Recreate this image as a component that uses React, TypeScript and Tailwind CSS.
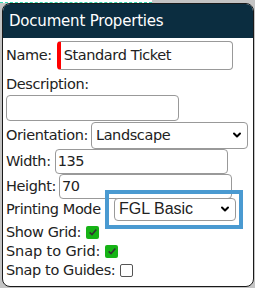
import { ChevronDown } from "lucide-react";

const FONT = { fontFamily: '"DejaVu Sans", "Liberation Sans", sans-serif' };

const Check = ({ on }: { on: boolean }) =>
    on ? (
        <span className="inline-flex w-[13px] h-[13px] rounded-[2px] bg-[#16b316] items-center justify-center">
            <svg viewBox="0 0 12 12" className="w-[10px] h-[10px]">
                <path d="M2 6.5 L4.8 9 L10 3" fill="none" stroke="#333" strokeWidth="2" />
            </svg>
        </span>
    ) : (
        <span className="inline-block w-[13px] h-[13px] rounded-[2px] border border-[#555] bg-white" />
    );

export default function App() {
    return (
        <div className="w-[255px] h-[288px] bg-[#c4c4c4] relative overflow-hidden" style={FONT}>
            <div className="absolute left-0 top-0 w-[152px] h-[3px] bg-white border-b border-dashed border-[#33d6b0]" />
            <div className="absolute left-[2px] top-[3px] w-[252px] h-[284px] bg-white border-[1.5px] border-[#1a1a1a] rounded-[8px] overflow-hidden flex flex-col text-[#222]">
                <div className="h-[34px] bg-[#0b2d40] text-white text-[15px] flex items-center px-[6px] tracking-[-0.2px]">
                    Document Properties
                </div>
                <div className="flex flex-col px-[3px] text-[14.5px] tracking-[-0.4px] leading-none">
                    <div className="flex items-center gap-[5px] mt-[3px]">
                        <span>Name:</span>
                        <div className="w-[176px] h-[29px] border border-[#999] border-l-[4px] border-l-[#ff0000] rounded-[4px] flex items-center px-[3px]">
                            Standard Ticket
                        </div>
                    </div>
                    <div className="mt-[7px]">Description:</div>
                    <div className="mt-[3px] w-[173px] h-[26px] border border-[#999] rounded-[4px]" />
                    <div className="flex items-center gap-[3px] mt-[1px]">
                        <span>Orientation:</span>
                        <div className="w-[157px] h-[27px] border border-[#999] rounded-[4px] flex items-center justify-between px-[4px]">
                            <span>Landscape</span>
                            <ChevronDown size={12} strokeWidth={4} className="text-black" />
                        </div>
                    </div>
                    <div className="flex items-center gap-[4px]">
                        <span>Width:</span>
                        <div className="w-[173px] h-[25px] border border-[#999] rounded-[4px] flex items-center px-[2px]">135</div>
                    </div>
                    <div className="flex items-center gap-[3px]">
                        <span>Height:</span>
                        <div className="w-[173px] h-[25px] border border-[#999] rounded-[4px] flex items-center px-[2px]">70</div>
                    </div>
                    <div className="flex items-center -mt-[9px]">
                        <span className="w-[99px] whitespace-nowrap">Printing Mode</span>
                        <div className="relative border-[4px] border-[#4a9ad1] pl-[5px] pr-[3px] py-[4px]">
                            <div className="w-[122px] h-[23px] border border-[#999] rounded-[4px] flex items-center justify-between px-[4px] bg-white"
                                style={{ fontFamily: '"Liberation Sans", Arial, sans-serif' }}>
                                <span className="text-[16px] tracking-normal">FGL Basic</span>
                                <ChevronDown size={12} strokeWidth={4} className="text-black" />
                            </div>
                        </div>
                    </div>
                    <div className="flex items-center gap-[5px] -mt-[6px] h-[19px]">
                        <span>Show Grid:</span>
                        <Check on />
                    </div>
                    <div className="flex items-center gap-[5px] h-[19px]">
                        <span className="tracking-[-0.1px]">Snap to Grid:</span>
                        <Check on />
                    </div>
                    <div className="flex items-center gap-[5px] h-[19px]">
                        <span>Snap to Guides:</span>
                        <Check on={false} />
                    </div>
                </div>
            </div>
        </div>
    );
}
